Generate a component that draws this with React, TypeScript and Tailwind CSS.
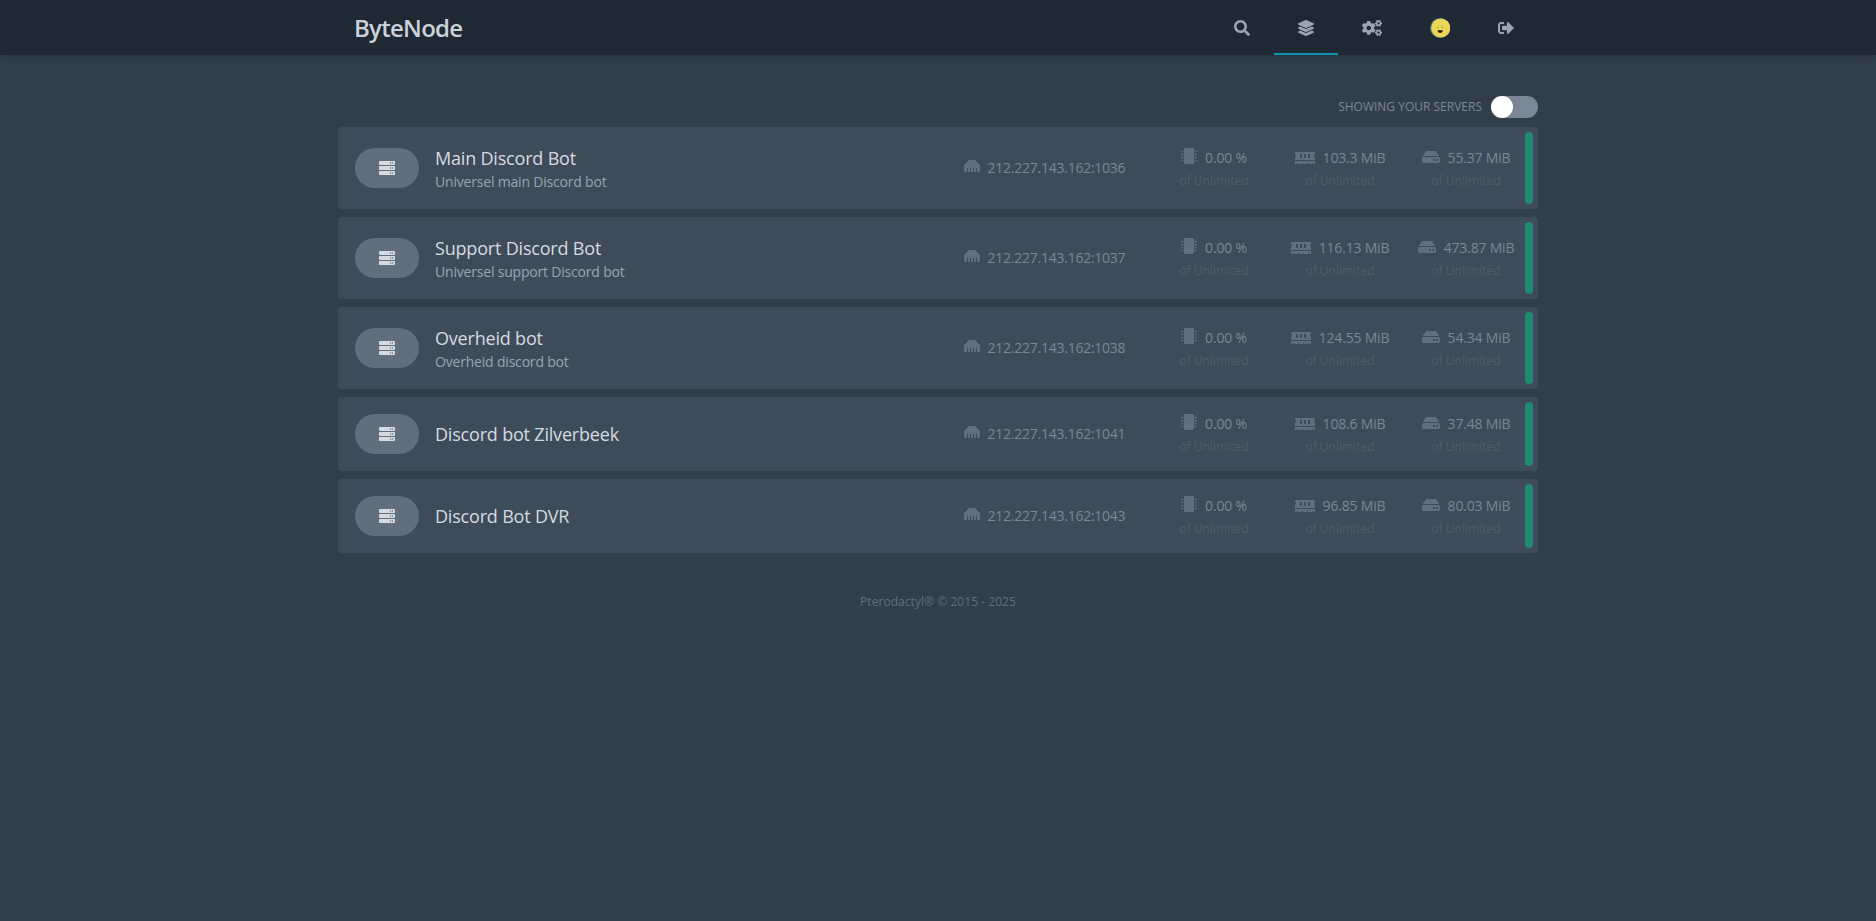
import { FaCogs, FaEthernet, FaHdd, FaLayerGroup, FaMemory, FaMicrochip, FaSearch, FaServer, FaSignOutAlt } from "react-icons/fa"

const SERVERS = [
	{ name: "Main Discord Bot", description: "Universel main Discord bot", port: 1036, memory: "103.3 MiB", disk: "55.37 MiB" },
	{ name: "Support Discord Bot", description: "Universel support Discord bot", port: 1037, memory: "116.13 MiB", disk: "473.87 MiB" },
	{ name: "Overheid bot", description: "Overheid discord bot", port: 1038, memory: "124.55 MiB", disk: "54.34 MiB" },
	{ name: "Discord bot Zilverbeek", port: 1041, memory: "108.6 MiB", disk: "37.48 MiB" },
	{ name: "Discord Bot DVR", port: 1043, memory: "96.85 MiB", disk: "80.03 MiB" },
]

function Avatar() {
	return (
		<svg viewBox="0 0 20 20" className="h-5 w-5">
			<circle cx="10" cy="10" r="10" fill="#4f6f96" />
			<circle cx="10.7" cy="10" r="9.6" fill="#ecd655" />
			<rect x="7.4" y="8.6" width="1" height="1.4" fill="#9a8b3a" />
			<rect x="11.8" y="8.6" width="1" height="1.4" fill="#9a8b3a" />
			<path d="M7.6 12.2h5.2c0 1.7-1 2.6-2.6 2.6s-2.6-.9-2.6-2.6z" fill="#1f1a10" />
		</svg>
	)
}

function NavBar() {
	return (
		<div className="h-[55px] w-full bg-[#1f2933] shadow-md">
			<div className="mx-auto flex h-full w-[1200px] items-center">
				<div className="flex-1 px-4 text-2xl font-semibold tracking-[-0.03em] text-[#cbd2d9]">ByteNode</div>
				<div className="flex h-full items-center text-[#9aa5b1]">
					<div className="flex h-full items-center px-6">
						<FaSearch size={16} />
					</div>
					<div className="flex h-full items-center border-b-2 border-[#0e93b3] px-6 pt-0.5">
						<FaLayerGroup size={16} />
					</div>
					<div className="flex h-full items-center px-6">
						<FaCogs size={20} />
					</div>
					<div className="flex h-full items-center px-6">
						<Avatar />
					</div>
					<div className="flex h-full items-center px-6">
						<FaSignOutAlt size={16} />
					</div>
				</div>
			</div>
		</div>
	)
}

function Stat({ icon, value }: { icon: React.ReactNode; value: string }) {
	return (
		<div className="ml-4 flex-1">
			<div className="flex justify-center">
				<span className="shrink-0 text-[#616e7c]">{icon}</span>
				<p className="ml-2 whitespace-nowrap text-sm text-[#7b8794]">{value}</p>
			</div>
			<p className="mt-[5px] text-center text-xs leading-[15px] tracking-normal text-[#4f5c69]">of Unlimited</p>
		</div>
	)
}

function ServerRow({ server }: { server: (typeof SERVERS)[number] }) {
	return (
		<div className="relative mb-2 grid grid-cols-12 items-center gap-4 rounded border border-transparent bg-[#3e4c59] p-4">
			<div className="col-span-6 flex items-center">
				<div className="mr-4 flex h-10 w-16 items-center justify-center rounded-full bg-[#616e7c] text-[#d5dae0]">
					<FaServer size={16} />
				</div>
				<div>
					<p className="text-lg leading-7 text-[#d5dae0]">{server.name}</p>
					{server.description && <p className="text-sm text-[#9aa5b1]">{server.description}</p>}
				</div>
			</div>
			<div className="col-span-2 ml-4 flex justify-center">
				<FaEthernet size={16} className="shrink-0 text-[#616e7c]" />
				<p className="ml-2 whitespace-nowrap text-sm tracking-[-0.018em] text-[#7b8794]">212.227.143.162:{server.port}</p>
			</div>
			<div className="col-span-4 flex items-baseline justify-center">
				<Stat icon={<FaMicrochip size={16} />} value="0.00 %" />
				<Stat icon={<FaMemory size={20} />} value={server.memory} />
				<Stat icon={<FaHdd size={18} />} value={server.disk} />
			</div>
			<div className="absolute inset-y-0 right-0 m-1 w-2 rounded-sm bg-[#1f8a70]" />
		</div>
	)
}

export default function App() {
	return (
		<div className="min-h-screen bg-[#323f4b] font-['Open_Sans',sans-serif] tracking-[-0.012em]">
			<NavBar />
			<div className="mx-auto mt-[41px] w-[1200px]">
				<div className="mb-[9px] flex h-[22px] items-center justify-end">
					<p className="mr-[9px] text-xs uppercase tracking-normal text-[#7b8794]">Showing your servers</p>
					<div className="relative h-[22px] w-[47px] rounded-full bg-[#7b8794]">
						<div className="absolute left-0 top-0 h-[22px] w-[22px] rounded-full bg-white" />
					</div>
				</div>
				{SERVERS.map((server) => (
					<ServerRow key={server.port} server={server} />
				))}
				<p className="mt-[41px] text-center text-xs tracking-[0.004em] text-[#616e7c]">Pterodactyl® © 2015 - 2025</p>
			</div>
		</div>
	)
}
